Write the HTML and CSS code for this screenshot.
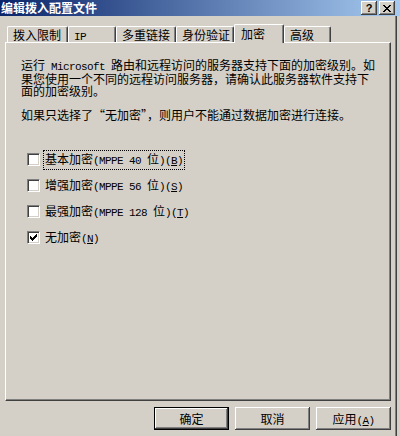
FILE: index.html
```html
<!DOCTYPE html>
<html lang="zh-CN">
<head>
    <meta charset="UTF-8">
    <title>编辑拨入配置文件</title>
    <link rel="stylesheet" href="styles.css">
</head>
<body>
    <div class="window">
        <!-- Title Bar -->
        <div class="titlebar">
            <span class="title">编辑拨入配置文件</span>
            <div class="caption-btns">
                <button class="cap-btn help">?</button>
                <button class="cap-btn">
                    <svg width="8" height="7" viewBox="0 0 8 7" shape-rendering="crispEdges">
                        <rect x="0" y="0" width="2" height="1"/><rect x="6" y="0" width="2" height="1"/>
                        <rect x="1" y="1" width="2" height="1"/><rect x="5" y="1" width="2" height="1"/>
                        <rect x="2" y="2" width="4" height="1"/>
                        <rect x="3" y="3" width="2" height="1"/>
                        <rect x="2" y="4" width="4" height="1"/>
                        <rect x="1" y="5" width="2" height="1"/><rect x="5" y="5" width="2" height="1"/>
                        <rect x="0" y="6" width="2" height="1"/><rect x="6" y="6" width="2" height="1"/>
                    </svg>
                </button>
            </div>
        </div>

        <div class="body">
            <!-- Tabs -->
            <div class="tabs">
                <div class="tab tab-dialin">拨入限制</div>
                <div class="tab tab-ip"><span class="latin">IP</span></div>
                <div class="tab tab-multi">多重链接</div>
                <div class="tab tab-auth">身份验证</div>
                <div class="tab tab-enc active">加密</div>
                <div class="tab tab-adv">高级</div>
            </div>

            <!-- Encryption Panel -->
            <div class="panel">
                <p class="desc">运行<span class="latin"> Microsoft </span>路由和远程访问的服务器支持下面的加密级别。如<br>果您使用一个不同的远程访问服务器，请确认此服务器软件支持下<br>面的加密级别。</p>
                <p class="note">如果只选择了<span class="fw">“</span>无加密<span class="fw">”</span>，则用户不能通过数据加密进行连接。</p>
                <ul class="options">
                    <li class="option">
                        <span class="check"></span>
                        <span class="label focus">基本加密<span class="latin">(MPPE 40 </span>位<span class="latin">)(<u>B</u>)</span></span>
                    </li>
                    <li class="option">
                        <span class="check"></span>
                        <span class="label">增强加密<span class="latin">(MPPE 56 </span>位<span class="latin">)(<u>S</u>)</span></span>
                    </li>
                    <li class="option">
                        <span class="check"></span>
                        <span class="label">最强加密<span class="latin">(MPPE 128 </span>位<span class="latin">)(<u>T</u>)</span></span>
                    </li>
                    <li class="option">
                        <span class="check checked">
                            <svg width="7" height="7" viewBox="0 0 7 7" shape-rendering="crispEdges">
                                <rect x="0" y="2" width="1" height="3"/>
                                <rect x="1" y="3" width="1" height="3"/>
                                <rect x="2" y="4" width="1" height="3"/>
                                <rect x="3" y="3" width="1" height="3"/>
                                <rect x="4" y="2" width="1" height="3"/>
                                <rect x="5" y="1" width="1" height="3"/>
                                <rect x="6" y="0" width="1" height="3"/>
                            </svg>
                        </span>
                        <span class="label">无加密<span class="latin">(<u>N</u>)</span></span>
                    </li>
                </ul>
            </div>

            <!-- Dialog Buttons -->
            <div class="actions">
                <button class="btn default">确定</button>
                <button class="btn">取消</button>
                <button class="btn">应用<span class="latin">(<u>A</u>)</span></button>
            </div>
        </div>
    </div>
</body>
</html>
```

FILE: styles.css
```css
body {
    margin: 0;
    padding: 0;
    font-family: "Noto Sans CJK SC", sans-serif;
    font-size: 12px;
    color: #000;
    background-color: #d4d0c8;
}
.window {
    width: 400px;
    height: 436px;
    background-color: #d4d0c8;
    display: flex;
    flex-direction: column;
    overflow: hidden;
}
.latin {
    font-family: "Liberation Mono", monospace;
    font-size: 11px;
    letter-spacing: -0.6px;
}
.fw {
    font-feature-settings: "fwid" 1;
}
/* Title Bar */
.titlebar {
    height: 16px;
    flex-shrink: 0;
    display: flex;
    align-items: center;
    justify-content: space-between;
    padding: 0 5px 0 1px;
    background: linear-gradient(to right, #0a246a, #a6caf0);
}
.title {
    color: #fff;
    font-weight: bold;
    line-height: 16px;
}
.caption-btns {
    display: flex;
    gap: 2px;
}
.cap-btn {
    width: 16px;
    height: 14px;
    padding: 0;
    border: none;
    background-color: #d4d0c8;
    box-shadow: inset -1px -1px #404040, inset 1px 1px #fff, inset -2px -2px #808080;
    display: flex;
    align-items: center;
    justify-content: center;
    color: #000;
}
.cap-btn.help {
    font-family: "Liberation Sans", sans-serif;
    font-weight: bold;
    font-size: 11px;
    line-height: 12px;
}
/* Body */
.body {
    flex: 1;
    width: 397px;
    box-sizing: border-box;
    border-right: 1px solid #404040;
    box-shadow: inset -1px 0 #808080;
    display: flex;
    flex-direction: column;
}
/* Tabs */
.tabs {
    display: flex;
    align-items: flex-end;
    height: 18px;
    margin-top: 8px;
    padding-left: 7px;
}
.tab {
    height: 16px;
    box-sizing: border-box;
    padding: 1px 0 0 5px;
    line-height: 14px;
    white-space: nowrap;
    border-top: 1px solid #fff;
    border-left: 1px solid #fff;
    border-right: 1px solid #404040;
    border-top-left-radius: 2px;
    border-top-right-radius: 2px;
    box-shadow: inset -1px 0 #808080;
}
.tab-dialin { width: 61px; }
.tab-ip { width: 48px; }
.tab-multi { width: 60px; }
.tab-auth { width: 58px; }
.tab-enc { width: 50px; }
.tab-adv { width: 47px; }
.tab.active {
    height: 19px;
    margin-bottom: -1px;
    padding: 2px 0 0 6px;
    background-color: #d4d0c8;
    position: relative;
    z-index: 1;
}
/* Panel */
.panel {
    height: 359px;
    width: 386px;
    margin-left: 5px;
    box-sizing: border-box;
    padding: 16px 0 0 15px;
    border-top: 1px solid #fff;
    border-left: 1px solid #fff;
    border-right: 1px solid #404040;
    border-bottom: 1px solid #404040;
    box-shadow: inset -1px -1px #808080;
}
.desc {
    margin: 0;
    line-height: 12px;
    white-space: nowrap;
}
.note {
    margin: 12px 0 0;
    line-height: 12px;
    white-space: nowrap;
}
/* Options */
.options {
    list-style: none;
    margin: 30px 0 0;
    padding: 0 0 0 6px;
    display: flex;
    flex-direction: column;
    gap: 9px;
}
.option {
    display: flex;
    align-items: center;
    height: 17px;
}
.check {
    width: 13px;
    height: 13px;
    box-sizing: border-box;
    background-color: #fff;
    border-top: 1px solid #808080;
    border-left: 1px solid #808080;
    border-right: 1px solid #fff;
    border-bottom: 1px solid #fff;
    box-shadow: inset 1px 1px #404040, inset -1px -1px #d4d0c8;
    display: flex;
    align-items: center;
    justify-content: center;
}
.label {
    margin-left: 3px;
    padding: 0 1px;
    line-height: 15px;
    border: 1px dotted transparent;
    white-space: nowrap;
}
.label.focus {
    border-color: #000;
}
/* Dialog Buttons */
.actions {
    display: flex;
    justify-content: flex-end;
    gap: 6px;
    margin-top: 6px;
    padding-right: 5px;
}
.btn {
    width: 75px;
    height: 23px;
    padding: 0;
    border: none;
    background-color: #d4d0c8;
    font-family: "Noto Sans CJK SC", sans-serif;
    font-size: 12px;
    color: #000;
    box-shadow: inset -1px -1px #404040, inset 1px 1px #fff, inset -2px -2px #808080;
}
.btn.default {
    border: 1px solid #000;
}
```
